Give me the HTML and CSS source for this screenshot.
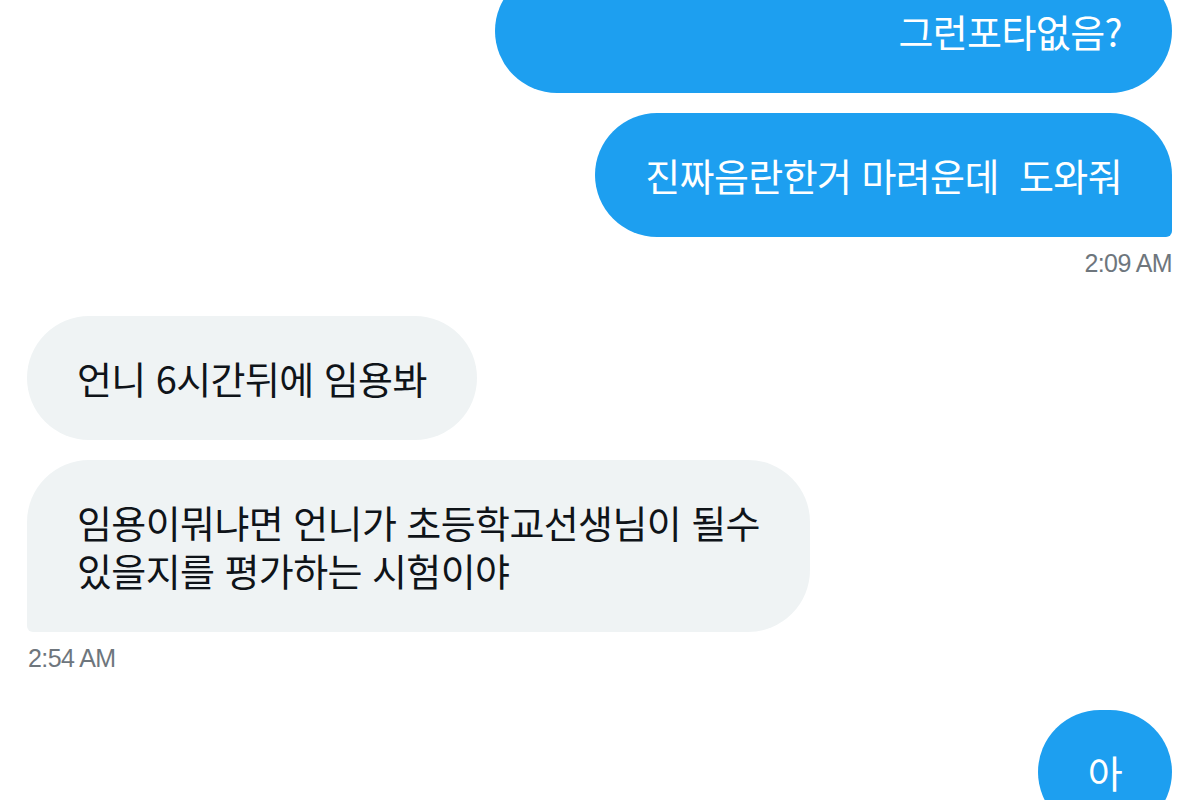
FILE: index.html
```html
<!DOCTYPE html>
<html lang="ko">
<head>
<meta charset="utf-8">
<link rel="stylesheet" href="styles.css">
</head>
<body>
<div class="chat">
  <div class="row out">
    <div class="bubble blue wide">그런포타없음?</div>
  </div>
  <div class="row out">
    <div class="bubble blue tail-right">진짜음란한거 마려운데&nbsp; 도와줘</div>
  </div>
  <div class="time right">2:09 AM</div>

  <div class="row in first-in">
    <div class="bubble gray">언니 6시간뒤에 임용봐</div>
  </div>
  <div class="row in">
    <div class="bubble gray tail-left">임용이뭐냐면 언니가 초등학교선생님이 될수<br>있을지를 평가하는 시험이야</div>
  </div>
  <div class="time left">2:54 AM</div>

  <div class="row out last-out">
    <div class="bubble blue">아</div>
  </div>
</div>
</body>
</html>
```

FILE: styles.css
```css
html, body {
  margin: 0;
  padding: 0;
  background: #ffffff;
  overflow: hidden;
  height: 800px;
}

.chat {
  display: flex;
  flex-direction: column;
  padding: 0 28px 0 27px;
  margin-top: -31px;
  font-family: "Noto Sans CJK KR", "Noto Sans", sans-serif;
}

.row {
  display: flex;
}

.row + .row {
  margin-top: 20px;
}

.row.out {
  justify-content: flex-end;
}

.row.in {
  justify-content: flex-start;
}

.row.first-in {
  margin-top: 41px;
}

.row.last-out {
  margin-top: 40px;
}

.bubble {
  font-size: 38px;
  line-height: 48px;
  padding: 38px 50px;
  border-radius: 62px;
  letter-spacing: -0.6px;
  white-space: nowrap;
}

.bubble.wide {
  width: 577px;
  text-align: right;
}

.blue {
  background: #1d9ff0;
  color: #ffffff;
}

.gray {
  background: #eff3f4;
  color: #0f1419;
}

.tail-right {
  border-bottom-right-radius: 6px;
}

.tail-left {
  border-bottom-left-radius: 6px;
}

.time {
  font-family: "Liberation Sans", Arial, sans-serif;
  font-size: 25px;
  line-height: 24px;
  color: #6e767d;
  margin-top: 14px;
  letter-spacing: -0.6px;
}

.time.right {
  text-align: right;
}

.time.left {
  text-align: left;
  padding-left: 1px;
}
```
